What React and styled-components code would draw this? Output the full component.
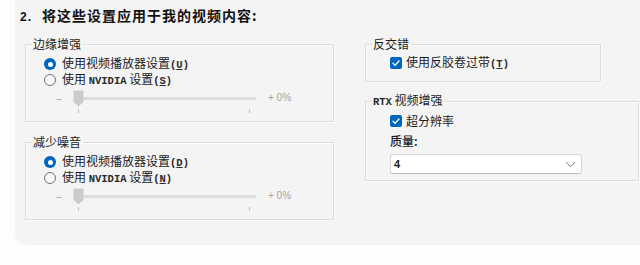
import styled, { createGlobalStyle } from "styled-components";

const GlobalStyle = createGlobalStyle`
  body {
    margin: 0;
    background: #fdfdfd;
    font-family: "Noto Sans CJK SC", "Noto Sans", sans-serif;
    color: #1b1b1b;
  }
`;

const Radio = ({ checked, children }) => (
  <OptionRow>
    <RadioDot $checked={checked} />
    <span>{children}</span>
  </OptionRow>
);

const Check = ({ children }) => (
  <OptionRow $gap={4}>
    <CheckBox>
      <svg width="12" height="12" viewBox="0 0 12 12">
        <path
          d="M3 6.2 L5.1 8.2 L9 4"
          fill="none"
          stroke="#fff"
          strokeWidth="1.3"
          strokeLinecap="round"
          strokeLinejoin="round"
        />
      </svg>
    </CheckBox>
    <span>{children}</span>
  </OptionRow>
);

const Key = ({ k }) => (
  <Mono>
    (<u>{k}</u>)
  </Mono>
);

const Slider = () => (
  <SliderRow>
    <Minus>–</Minus>
    <TrackArea>
      <Rail>
        <Track />
        <Thumb>
          <svg width="11" height="17" viewBox="0 0 11 17">
            <path d="M0.5 0.5 H10.5 V12 L5.5 16.5 L0.5 12 Z" fill="#cbcbcb" />
          </svg>
        </Thumb>
      </Rail>
      <Ticks>
        <Tick />
        <Tick />
      </Ticks>
    </TrackArea>
    <Plus>+ 0%</Plus>
  </SliderRow>
);

export default function App() {
  return (
    <>
      <GlobalStyle />
      <Page>
        <Panel>
          <Title>
            <Num>2.</Num>将这些设置应用于我的视频内容:
          </Title>
          <Columns>
            <Column $gap={13}>
              <Group>
                <Legend>边缘增强</Legend>
                <GroupBody $left={18} $top={5} $bottom={8}>
                  <Radio checked>
                    使用视频播放器设置
                    <Key k="U" />
                  </Radio>
                  <Radio>
                    使用 <Mono>NVIDIA</Mono> 设置
                    <Key k="S" />
                  </Radio>
                  <Slider />
                </GroupBody>
              </Group>
              <Group>
                <Legend>减少噪音</Legend>
                <GroupBody $left={18} $top={5} $bottom={8}>
                  <Radio checked>
                    使用视频播放器设置
                    <Key k="D" />
                  </Radio>
                  <Radio>
                    使用 <Mono>NVIDIA</Mono> 设置
                    <Key k="N" />
                  </Radio>
                  <Slider />
                </GroupBody>
              </Group>
            </Column>
            <Column $gap={11}>
              <Group $width={236}>
                <Legend>反交错</Legend>
                <GroupBody $left={24} $top={4} $bottom={10}>
                  <Check>
                    使用反胶卷过带
                    <Key k="T" />
                  </Check>
                </GroupBody>
              </Group>
              <Group>
                <Legend>
                  <Mono>RTX</Mono> 视频增强
                </Legend>
                <GroupBody $left={24} $top={4} $bottom={6}>
                  <Check>超分辨率</Check>
                  <FieldLabel>质量:</FieldLabel>
                  <SelectBox>
                    <span>4</span>
                    <svg width="11" height="7" viewBox="0 0 11 7">
                      <path
                        d="M1 1.2 L5.5 5.6 L10 1.2"
                        fill="none"
                        stroke="#7a7a7a"
                        strokeWidth="1"
                      />
                    </svg>
                  </SelectBox>
                </GroupBody>
              </Group>
            </Column>
          </Columns>
        </Panel>
      </Page>
    </>
  );
}

const Page = styled.div`
  width: 640px;
  height: 265px;
  padding-left: 15px;
  box-sizing: border-box;
  overflow: hidden;
`;

const Panel = styled.div`
  width: 625px;
  height: 245px;
  box-sizing: border-box;
  padding: 7px 0 0 5px;
  background: #f4f4f4;
  border-bottom-left-radius: 10px;
`;

const Title = styled.div`
  font-size: 14px;
  line-height: 16px;
  font-weight: 700;
  letter-spacing: 1px;
  color: #111;
`;

const Num = styled.span`
  display: inline-block;
  width: 22px;
  font-family: "Liberation Sans", sans-serif;
  font-size: 12px;
  letter-spacing: 1px;
`;

const Columns = styled.div`
  display: grid;
  grid-template-columns: 309px 274px;
  column-gap: 31px;
  margin: 12px 0 0 5px;
  align-items: start;
`;

const Column = styled.div`
  display: flex;
  flex-direction: column;
  align-items: flex-start;
  gap: ${(p) => p.$gap}px;
`;

const Group = styled.fieldset`
  margin: 0;
  padding: 0;
  min-width: 0;
  width: ${(p) => (p.$width ? `${p.$width}px` : "100%")};
  box-sizing: border-box;
  border: 1px solid #dcdcdc;
  box-shadow: inset 1px 1px 0 #fcfcfc, 1px 1px 0 #fcfcfc;
`;

const Legend = styled.legend`
  margin-left: 6px;
  padding: 0 2px 0 1px;
  font-size: 12px;
  line-height: 14px;
  color: #1b1b1b;
`;

const GroupBody = styled.div`
  display: flex;
  flex-direction: column;
  align-items: flex-start;
  padding: ${(p) => `${p.$top}px 0 ${p.$bottom}px ${p.$left}px`};
`;

const OptionRow = styled.label`
  display: flex;
  align-items: center;
  gap: ${(p) => p.$gap ?? 6}px;
  height: 16px;
  font-size: 12px;
  line-height: 16px;
  white-space: pre;
  color: #1b1b1b;
`;

const Mono = styled.span`
  font-family: "Liberation Mono", "DejaVu Sans Mono", monospace;
  font-size: 10.5px;
  font-weight: 700;
  color: #2a2a2a;

  u {
    text-underline-offset: 1px;
  }
`;

const RadioDot = styled.span`
  flex: none;
  width: 12px;
  height: 12px;
  box-sizing: border-box;
  border-radius: 50%;
  display: grid;
  place-items: center;
  background: ${(p) => (p.$checked ? "#0067c0" : "#fafafa")};
  border: ${(p) => (p.$checked ? "none" : "1px solid #6f6f6f")};

  &::after {
    content: "";
    width: 5px;
    height: 5px;
    border-radius: 50%;
    background: #fff;
    display: ${(p) => (p.$checked ? "block" : "none")};
  }
`;

const CheckBox = styled.span`
  flex: none;
  width: 12px;
  height: 12px;
  border-radius: 2px;
  background: #0067c0;
  display: flex;
`;

const SliderRow = styled.div`
  display: flex;
  align-items: flex-start;
  padding-left: 12px;
`;

const Minus = styled.span`
  width: 17px;
  font-size: 11px;
  line-height: 20px;
  color: #9a9a9a;
`;

const Plus = styled.span`
  margin-left: 12px;
  font-family: "Liberation Sans", sans-serif;
  font-size: 10px;
  line-height: 20px;
  color: #a3a3a3;
`;

const TrackArea = styled.div`
  width: 183px;
  display: flex;
  flex-direction: column;
`;

const Rail = styled.div`
  position: relative;
  height: 20px;
`;

const Track = styled.div`
  position: absolute;
  left: 6px;
  right: 0;
  top: 9px;
  height: 3px;
  background: #dcdcdc;
`;

const Thumb = styled.div`
  position: absolute;
  left: 0;
  top: 2px;
  display: flex;
`;

const Ticks = styled.div`
  display: flex;
  justify-content: space-between;
  padding: 1px 6px 0 5px;
`;

const Tick = styled.span`
  width: 1px;
  height: 4px;
  background: #c2c2c2;
`;

const FieldLabel = styled.div`
  margin-top: 4px;
  font-size: 12px;
  line-height: 16px;
  font-weight: 500;
`;

const SelectBox = styled.div`
  margin-top: 5px;
  width: 192px;
  height: 20px;
  box-sizing: border-box;
  display: flex;
  align-items: center;
  justify-content: space-between;
  padding: 0 5px 0 3px;
  background: #fff;
  border: 1px solid #d6d6d6;
  border-bottom-color: #bdbdbd;
  border-radius: 3px;
  font-family: "Liberation Sans", sans-serif;
  font-size: 11px;
  font-weight: 700;
`;
